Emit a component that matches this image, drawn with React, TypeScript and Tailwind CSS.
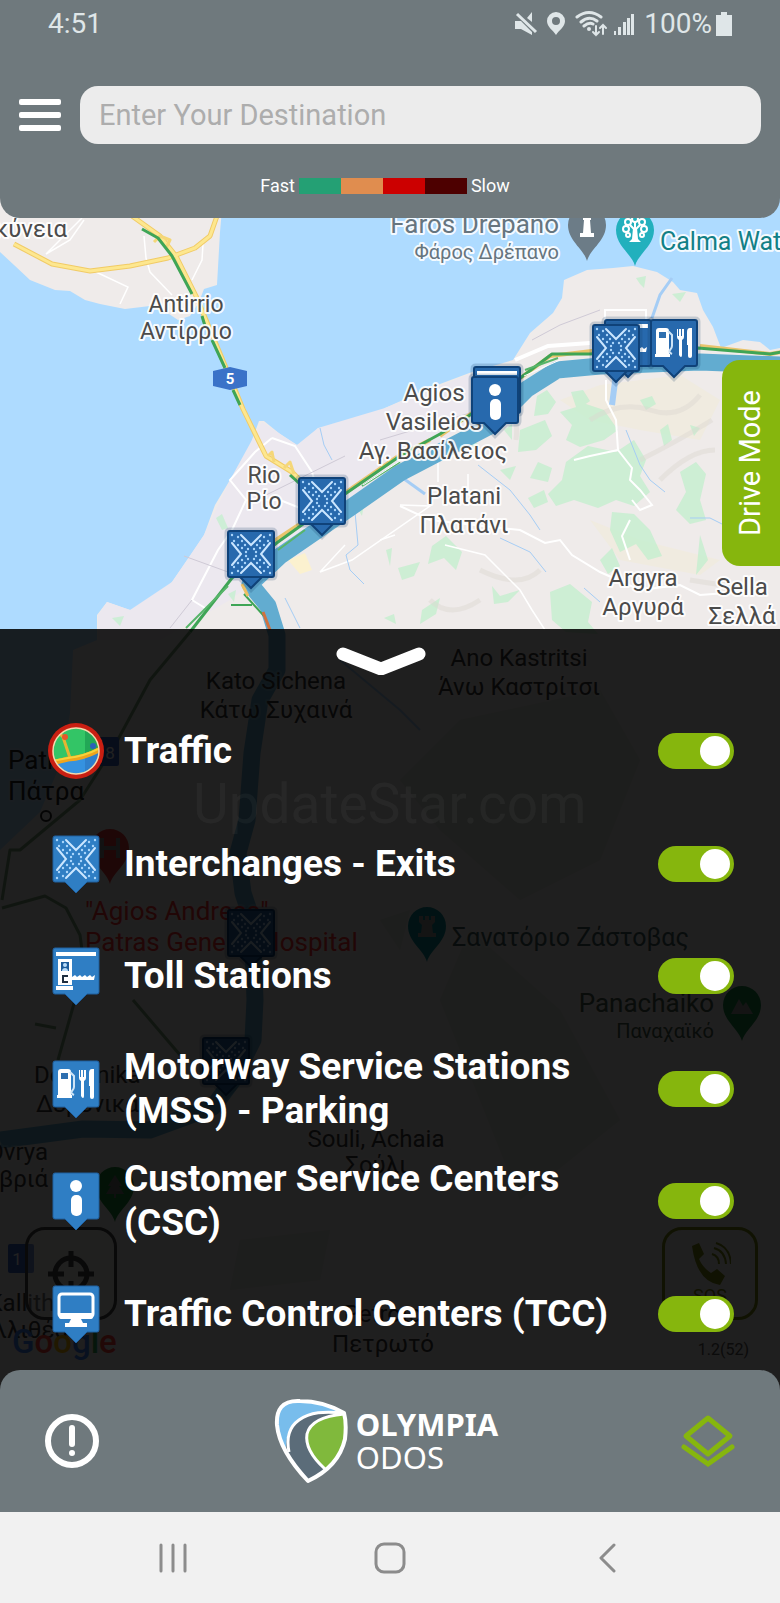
import { useState } from "react";

type PinKind = "interchange" | "toll" | "mss" | "info" | "tcc";

const LAYERS: { id: string; label: string; pin?: PinKind }[] = [
    { id: "traffic", label: "Traffic" },
    { id: "interchanges", label: "Interchanges - Exits", pin: "interchange" },
    { id: "tolls", label: "Toll Stations", pin: "toll" },
    { id: "mss", label: "Motorway Service Stations (MSS) - Parking", pin: "mss" },
    { id: "csc", label: "Customer Service Centers (CSC)", pin: "info" },
    { id: "tcc", label: "Traffic Control Centers (TCC)", pin: "tcc" },
];

const SPEEDS = ["bg-[#24a074]", "bg-[#e08d4f]", "bg-[#cc0000]", "bg-[#4d0000]"];

type Anchor = "start" | "middle" | "end";

// x, baseline, text, anchor, size, colour
const PLACES: [number, number, string, Anchor, number, string][] = [
    [67, 237, "κύνεια", "end", 24, "#4b4b4b"],
    [186, 312, "Antirrio", "middle", 23, "#4b4b4b"],
    [186, 339, "Αντίρριο", "middle", 23, "#4b4b4b"],
    [264, 483, "Rio", "middle", 23, "#4b4b4b"],
    [264, 509, "Ρίο", "middle", 23, "#4b4b4b"],
    [434, 401, "Agios", "middle", 24, "#4b4b4b"],
    [434, 430, "Vasileios", "middle", 24, "#4b4b4b"],
    [433, 459, "Αγ. Βασίλειος", "middle", 24, "#4b4b4b"],
    [464, 504, "Platani", "middle", 24, "#4b4b4b"],
    [464, 533, "Πλατάνι", "middle", 24, "#4b4b4b"],
    [643, 586, "Argyra", "middle", 24, "#4b4b4b"],
    [643, 615, "Αργυρά", "middle", 24, "#4b4b4b"],
    [742, 595, "Sella", "middle", 24, "#4b4b4b"],
    [742, 624, "Σελλά", "middle", 24, "#4b4b4b"],
    [559, 233, "Faros Drepano", "end", 26, "#66757f"],
    [559, 259, "Φάρος Δρέπανο", "end", 20, "#66757f"],
    [660, 250, "Calma Water", "start", 25, "#128087"],
    [276, 689, "Kato Sichena", "middle", 24, "#3a3a3a"],
    [276, 718, "Κάτω Συχαινά", "middle", 24, "#3a3a3a"],
    [519, 666, "Ano Kastritsi", "middle", 24, "#3a3a3a"],
    [519, 695, "Άνω Καστρίτσι", "middle", 24, "#3a3a3a"],
    [8, 769, "Patra", "start", 26, "#222222"],
    [8, 800, "Πάτρα", "start", 26, "#222222"],
    [85, 920, "\"Agios Andreas\"", "start", 26, "#ff3030"],
    [85, 951, "Patras General Hospital", "start", 26, "#ff3030"],
    [452, 946, "Σανατόριο Ζάστοβας", "start", 25, "#3f5f60"],
    [714, 1012, "Panachaiko", "end", 26, "#45604d"],
    [714, 1038, "Παναχαϊκό", "end", 20, "#45604d"],
    [34, 1083, "Demenika", "start", 24, "#3a3a3a"],
    [36, 1112, "Δεμένικα", "start", 24, "#3a3a3a"],
    [48, 1160, "Ovrya", "end", 24, "#3a3a3a"],
    [48, 1187, "Οβριά", "end", 24, "#3a3a3a"],
    [376, 1147, "Souli, Achaia", "middle", 24, "#3a3a3a"],
    [376, 1173, "Σούλι", "middle", 24, "#3a3a3a"],
    [383, 1322, "Petroto", "middle", 24, "#3a3a3a"],
    [383, 1352, "Πετρωτό", "middle", 24, "#3a3a3a"],
    [80, 1311, "Kallithea", "end", 24, "#3a3a3a"],
    [68, 1338, "Καλλιθέα", "end", 24, "#3a3a3a"],
];

const MARKERS: [number, number, PinKind][] = [
    [228, 531, "interchange"],
    [299, 478, "interchange"],
    [605, 320, "toll"],
    [593, 325, "interchange"],
    [651, 320, "mss"],
    [474, 367, "toll"],
    [472, 377, "info"],
    [228, 910, "interchange"],
    [203, 1038, "interchange"],
];

// one arm of the dotted crossing, mirrored into the other three corners
const ARM_DOTS = [[4, 4], [10, 6], [6, 10], [14, 10], [10, 14], [17, 14], [14, 17], [20, 18], [18, 21]];

function PinGlyph({ kind }: { kind: PinKind }) {
    switch (kind) {
        case "interchange":
            return (
                <g>
                    <g fill="none" stroke="#cbe6ff" strokeWidth="2" strokeLinecap="round">
                        <path d="M13 4L23 14L33 4M13 42L23 32L33 42M4 12L13 23L4 34M42 12L33 23L42 34" />
                    </g>
                    <g fill="#a9d6fb">
                        {ARM_DOTS.map(([x, y]) => (
                            <g key={`${x}-${y}`}>
                                <circle cx={x} cy={y} r="1.2" />
                                <circle cx={46 - x} cy={y} r="1.2" />
                                <circle cx={x} cy={46 - y} r="1.2" />
                                <circle cx={46 - x} cy={46 - y} r="1.2" />
                            </g>
                        ))}
                    </g>
                </g>
            );
        case "toll":
            return (
                <g fill="#fff">
                    <rect x="3" y="4" width="40" height="4" />
                    <path d="M5 11h14v26H5z" />
                    <path d="M3 38h17v4H3z" />
                    <path d="M8 14h8v9H8z" fill="#1d5c9a" />
                    <circle cx="12" cy="17" r="2" fill="#b9dcf8" />
                    <path d="M9 23c0-4 6-4 6 0z" fill="#b9dcf8" />
                    <path d="M15 28h-5v6h5" fill="none" stroke="#1f2f40" strokeWidth="2" />
                    <path d="M19 29l3-2 2 2 3-2 2 2 3-2 2 2 3-2 2 2 3-2-1 5H19z" />
                </g>
            );
        case "mss":
            return (
                <g fill="#fff">
                    <path d="M5 11q0-3 3-3h7q3 0 3 3v23h1v3H4v-3h1z" />
                    <path d="M8 12h7v6H8z" fill="#2d6fb0" />
                    <path d="M17 11l4 4v11q0 2-2 4t2 4" fill="none" stroke="#cfe4f6" strokeWidth="2" />
                    <path d="M26 9h1v7h1V9h2v7h1V9h2v8q0 2-2 3v15q0 2-1 2t-2-2V20q-2-1-2-3z" />
                    <path d="M36 12q0-4 3-4h2v28q0 2-2 2t-2-2V25h-1z" />
                </g>
            );
        case "info":
            return (
                <g fill="#fff">
                    <circle cx="23" cy="13" r="6" />
                    <rect x="18" y="22" width="11" height="21" rx="5" />
                </g>
            );
        case "tcc":
            return (
                <g>
                    <rect x="6" y="8" width="34" height="23" rx="3" fill="none" stroke="#fff" strokeWidth="3" />
                    <path d="M6 27h34v4q0 2-2 2H8q-2 0-2-2zM18 33h10l2 4h4v4H12v-4h4z" fill="#fff" />
                </g>
            );
    }
}

function Pin({ kind, x, y, outlined = false }: { kind: PinKind; x?: number; y?: number; outlined?: boolean }) {
    const body = "M2 0H44Q46 0 46 2V44Q46 46 44 46H34L23 57L12 46H2Q0 46 0 44V2Q0 0 2 0Z";
    return (
        <svg x={x} y={y} width="46" height="56" viewBox="0 0 46 56" overflow="visible" aria-hidden="true">
            {outlined && <path d={body} fill="none" stroke="#123a66" strokeOpacity="0.2" strokeWidth="7" />}
            <path
                d={body}
                fill={outlined ? "#2769ad" : "#2f7ec4"}
                stroke={outlined ? "#0f4279" : "#20609f"}
                strokeWidth={outlined ? 2 : 1}
            />
            {outlined && kind === "interchange" && <path d="M12 46H34" stroke="#0f4279" strokeWidth="2" />}
            <PinGlyph kind={kind} />
        </svg>
    );
}

function TrafficIcon() {
    return (
        <svg width="56" height="56" viewBox="0 0 56 56" aria-hidden="true">
            <defs>
                <clipPath id="traffic-disc">
                    <circle cx="28" cy="28" r="23" />
                </clipPath>
            </defs>
            <circle cx="28" cy="28" r="28" fill="#c91f12" />
            <g clipPath="url(#traffic-disc)">
                <rect width="56" height="56" fill="#33c566" />
                <path d="M37 0H56V56H37Z" fill="#22a756" />
                <path d="M0 42L20 37Q40 36 56 24V56H0Z" fill="#3592e0" />
                <path d="M37 35Q48 31 56 24V56H37Z" fill="#2f80cc" />
                <path d="M0 41L20 36Q38 35 56 24" fill="none" stroke="#f0a51c" strokeWidth="5" />
                <path d="M10 9L15 14L22 35" fill="none" stroke="#e5b432" strokeWidth="3" />
                <path d="M4 38L20 35Q38 33 54 24" fill="none" stroke="#f6d33c" strokeWidth="2" />
                <circle cx="17" cy="14" r="3" fill="#e6572b" />
                <circle cx="45" cy="23" r="3" fill="#2b62b8" />
            </g>
            <circle cx="28" cy="28" r="23" fill="none" stroke="#f5d9ae" strokeWidth="1.5" />
        </svg>
    );
}

function Teardrop({ x, y, fill, children }: { x: number; y: number; fill: string; children: React.ReactNode }) {
    return (
        <g transform={`translate(${x} ${y})`}>
            <path d="M0 36C-3 24-19 16-19 0A19 19 0 0 1 19 0C19 16 3 24 0 36Z" fill={fill} />
            {children}
        </g>
    );
}

function MapCanvas() {
    return (
        <svg
            className="absolute inset-0 h-full w-full"
            viewBox="0 198 780 1192"
            preserveAspectRatio="xMidYMin slice"
            fontFamily="Roboto, 'Noto Sans', sans-serif"
            role="img"
            aria-label="Map of Patras and Rio"
        >
            <rect y="198" width="780" height="1192" fill="#aedbff" />

            <g fill="#efebea">
                <path d="M0 198H223L220 232L217 285L204 289L199 302L190 316L178 320L166 312L150 306L125 309L100 304L85 300L70 291L55 290L30 280L14 265L0 252Z" />
                <path d="M97 640L97 615L107 602L130 610L150 606L172 582L190 556L204 535L215 505L230 480L248 456L252 440L259 421L264 421L280 434L297 445L308 440L318 428L335 432L352 423L368 420L385 408L403 400L440 384L472 372L513 360L530 333L553 313L562 298L564 280L587 270L613 268L633 266L657 272L673 282L680 290L697 293L703 310L713 327L721 348L743 340L760 342L770 350L780 348V1390H0V850L40 812L62 760L70 713L73 650Z" />
            </g>
            <path d="M252 440L262 422L297 445L318 428L385 408L470 374L500 400L345 510L230 600L160 640H98V615L107 602L130 610L172 582L204 535L230 480Z" fill="#ece8ef" />

            {/* hills and woods */}
            <g fill="#f0ebe0">
                <path d="M560 400L600 385L680 375L720 400L700 440L640 430L590 420Z" />
                <path d="M288 560L305 553L312 570L300 574Z" fill="#fbf1cf" />
                <path d="M590 520L640 540L720 560L700 575L620 560Z" />
            </g>
            <g fill="#c5efcf" opacity="0.8">
                <path d="M537 396L547 390L556 402L548 414L534 416ZM571 392L583 390L590 401L577 410ZM560 412L586 404L604 410L618 430L604 440L580 447L566 440L572 425Z" />
                <path d="M566 462L588 446L616 452L634 440L646 460L640 476L650 492L634 506L616 500L598 508L574 500L556 506L548 494L562 480Z" />
                <path d="M520 430L545 420L552 436L536 450L518 452ZM538 462L552 468L548 482L530 478Z" />
                <path d="M680 472L696 462L706 474L700 500L706 520L690 524L676 510L686 492ZM612 512L634 514L650 530L662 556L648 560L636 544L620 552L610 530Z" />
                <path d="M432 546L446 536L462 552L456 570L444 558L428 564ZM398 568L420 562L414 576L402 580Z" />
                <path d="M550 592L570 584L592 602L588 622L598 634L566 632L552 620ZM700 535L708 560L696 575Z" />
                <path d="M636 278L646 276L644 288L640 284ZM672 294L686 292L680 302ZM422 610L440 598L436 614L420 624ZM492 586L500 596L520 590L508 602L494 604Z" />
                <path d="M216 518L222 514L228 528L222 530ZM228 594L236 590L234 602ZM112 618L124 616L120 626ZM356 506L364 504L362 516ZM386 550L392 548L390 566ZM384 618L394 614L396 624Z" />
                <path d="M480 400L500 395L505 404L488 412ZM690 425L700 428L694 436ZM470 440L480 445L474 452ZM500 470L516 466L510 480Z" />
                <path d="M600 560L612 548L620 566L608 574ZM640 400L652 396L656 404L646 410ZM660 430L668 424L672 440L664 446ZM528 498L544 490L548 502L534 508ZM504 430L512 424L512 440Z" />
            </g>
            <g fill="#a9d8b4" opacity="0.25">
                <path d="M460 720L600 690L640 760L600 860L520 900L440 830L400 780Z" />
                <path d="M470 930L560 1010L620 1120L520 1200L480 1100L440 1000Z" />
                <path d="M240 1240L330 1230L320 1280L230 1290ZM380 920L410 910L400 950Z" />
            </g>
            <g fill="none" stroke="#dcd7d0" strokeWidth="5" opacity="0.45">
                <path d="M590 420Q620 400 650 410T700 395M640 460Q680 440 712 420M500 400Q520 410 516 440M660 480Q690 450 715 450M480 570Q520 590 540 570M690 580Q720 585 760 590M430 600Q450 620 480 600" />
            </g>

            {/* minor roads and streams */}
            <g fill="none" stroke="#ffffff" strokeWidth="2">
                <path d="M82 218L46 254L70 240L84 220M144 236L146 258L150 272L172 295M203 244L202 260L192 280M96 272L128 287L120 304" strokeWidth="1.5" />
                <path d="M272 438L255 452L230 480L246 500L232 530L218 550L192 600L205 608M272 438L295 446L312 472L320 500M246 500L280 500L300 508" strokeWidth="2" />
                <path d="M400 505L430 506L352 560L320 572L345 545M438 462V482M468 474V490" strokeWidth="1.5" />
                <path d="M515 360L548 346L590 343" strokeWidth="4" />
                <path d="M605 322V310H646V320" />
                <path d="M606 380L606 400L616 420L618 450L632 468L630 480L640 490L652 505L640 510L632 500M618 450L590 456L574 460M630 520L622 536L630 560" />
                <path d="M400 506L430 520L520 530L545 543L560 540L572 555L600 572L640 590L680 585L700 595L740 592" />
                <path d="M445 545L485 555L500 570L520 590L532 610L545 630M380 540L395 535" strokeWidth="1.5" />
            </g>
            <g fill="none" stroke="#cfcad6" strokeWidth="1">
                <path d="M184 556L228 572M264 496L345 456M480 410L380 440M532 340L560 325L600 310M170 628L192 600" />
            </g>
            <g fill="none" stroke="#a5cdf5" strokeWidth="1">
                <path d="M320 428L324 445L332 460M355 512L358 545L346 555L350 570L364 584M285 598L300 628" />
                <path d="M672 278L660 295L652 318" strokeWidth="3" />
                <path d="M400 476L425 494" strokeWidth="3" />
                <path d="M478 465L510 490L530 515L540 530M500 538L530 552L546 572M626 430L640 465L650 480L665 492M690 518L710 518L722 524M584 588L600 602" />
                <path d="M616 374L612 405" strokeWidth="6" />
                <path d="M340 660L400 710L420 730" strokeWidth="2" />
            </g>

            {/* bridge and provincial roads */}
            <g fill="none" strokeLinejoin="round">
                <g stroke="#f1cb66" strokeWidth="5">
                    <path d="M14 244L52 264L90 271L130 266L168 258L195 248L210 236L217 216M132 216L160 236L176 256L196 296L226 368L243 409L266 456L292 472L302 482" />
                </g>
                <g stroke="#fde78f" strokeWidth="3">
                    <path d="M14 244L52 264L90 271L130 266L168 258L195 248L210 236L217 216M132 216L160 236L176 256L196 296L226 368L243 409L266 456L292 472L302 482" />
                </g>
                <path d="M154 242L160 236L170 240L166 248M268 456L272 452L274 462M284 468L290 462L294 474" stroke="#f5d778" strokeWidth="3" />
                <path d="M142 229L158 238L172 256L192 294M202 316L205 326M212 340L225 368M233 390L240 405M290 475L300 484" stroke="#3fa556" strokeWidth="3" />
            </g>

            {/* motorway */}
            <g fill="none" strokeLinejoin="round">
                <path
                    d="M0 1140L83 1129L150 1130L213 1107L233 1080L253 1040L255 1000L252 920L243 893L238 853L247 820L252 753L260 700L277 670V635L268 606L250 584L280 556L350 508L400 473L490 426L527 389L557 370L600 366L700 362L780 365"
                    stroke="#62acd0"
                    strokeWidth="17"
                />
                <path d="M250 557L300 524L400 455L430 440M440 436L515 382L550 356L600 350M700 346L770 354L782 352" stroke="#e9c46c" strokeWidth="4" />
                <path d="M190 632L232 578L278 542L345 494L400 456L440 434L470 415L515 382L552 354L590 354L640 350L698 348L770 354L782 352" stroke="#3fa556" strokeWidth="3" />
                <path d="M186 628L228 586M278 550L305 530M362 486L400 462M525 370L558 358" stroke="#57b56a" strokeWidth="2" />
                <path d="M363 485L400 461M524 376L560 360" stroke="#ffffff" strokeWidth="1" />
                <path d="M231 605H252M244 594L264 616" stroke="#3fa556" strokeWidth="2" />
                <path d="M263 612L270 630" stroke="#d0713f" strokeWidth="3" />
                <path d="M242 584L248 596" stroke="#edbf62" strokeWidth="3" />
                <path d="M190 632L150 680L115 745L80 800L20 850H10L2 900M2 908L45 896L66 908L80 935L82 950M75 1000L58 1060M133 1000L180 1055M35 1024L56 1028" stroke="#7ba47c" strokeWidth="3" />
            </g>

            <path d="M213 371L230 367L247 371V386L230 390L213 386Z" fill="#3a72c8" />
            <text x="230" y="384" textAnchor="middle" fontSize="15" fontWeight="700" fill="#fff">5</text>
            <rect x="97" y="737" width="22" height="29" rx="2" fill="#3a62c8" />
            <text x="110" y="759" textAnchor="middle" fontSize="17" fill="#fff">8</text>
            <rect x="8" y="1244" width="26" height="29" rx="2" fill="#3a62c8" />
            <text x="17" y="1265" textAnchor="middle" fontSize="17" fill="#fff">1</text>
            <circle cx="46" cy="816" r="5" fill="none" stroke="#222" strokeWidth="2" />

            <Teardrop x={587} y={225} fill="#6c7c87">
                <path d="M-4-8H4V-5H3L4 8H7V12H-7V8H-4L-3-5H-4Z" fill="#fff" />
            </Teardrop>
            <Teardrop x={635} y={230} fill="#22b0bd">
                <g fill="none" stroke="#fff" strokeWidth="2">
                    <circle cx="0" cy="-11" r="3" />
                    <circle cx="-7" cy="-8" r="3" />
                    <circle cx="7" cy="-8" r="3" />
                    <circle cx="-9" cy="-1" r="3" />
                    <circle cx="9" cy="-1" r="3" />
                    <circle cx="7" cy="5" r="2" />
                    <circle cx="-7" cy="5" r="2" />
                    <path d="M0-8V0M-5-5L0 0L5-5" />
                </g>
                <path d="M-2-2H2L3 9L6 12H-6L-3 9Z" fill="#fff" />
            </Teardrop>
            <Teardrop x={110} y={848} fill="#e53935">
                <path d="M-8-10V10M8-10V10M-8 0H8" fill="none" stroke="#888" strokeWidth="4" />
            </Teardrop>
            <Teardrop x={427} y={926} fill="#0c8f98">
                <path d="M-8-10V-4L-5-1L-6 7H-9V11H9V7H6L5-1L8-4V-10H4V-6H2V-10H-2V-6H-4V-10Z" fill="#999" />
            </Teardrop>
            <Teardrop x={742} y={1005} fill="#1c8a4a">
                <path d="M-11 9L-3-6L1 1L4-3L11 9Z" fill="#999" />
            </Teardrop>
            <Teardrop x={115} y={1186} fill="#1c8a3a">
                <path d="M0-11L7 0H4L9 8H1V12H-1V8H-9L-4 0H-7Z" fill="#777" />
            </Teardrop>

            {PLACES.map(([x, y, text, anchor, size, color]) => (
                <text
                    key={text}
                    x={x}
                    y={y}
                    textAnchor={anchor}
                    fontSize={size}
                    fill={color}
                    stroke="#ffffff"
                    strokeOpacity={y > 640 ? 0.2 : 0.9}
                    strokeWidth="4"
                    strokeLinejoin="round"
                    paintOrder="stroke"
                >
                    {text}
                </text>
            ))}

            {MARKERS.map(([x, y, kind]) => (
                <Pin key={`${x}-${y}`} kind={kind} x={x} y={y} outlined />
            ))}

            <text x="12" y="1353" fontSize="33" fontWeight="500">
                <tspan fill="#4285f4">G</tspan>
                <tspan fill="#ff4335">o</tspan>
                <tspan fill="#fbbc05">o</tspan>
                <tspan fill="#4285f4">g</tspan>
                <tspan fill="#34a853">l</tspan>
                <tspan fill="#ff4335">e</tspan>
            </text>
            <text x="749" y="1355" textAnchor="end" fontSize="16" fill="#555">1.2(52)</text>
        </svg>
    );
}

function StatusBar() {
    return (
        <div className="flex h-12 items-center justify-between px-12 text-[#dfe6e8]">
            <span className="text-[28px] leading-8">4:51</span>
            <div className="flex items-center">
                <svg width="132" height="32" viewBox="0 0 132 32" fill="#dfe6e8" aria-hidden="true">
                    {/* muted speaker */}
                    <path d="M13 13H19L24 18L30 24V27L19 21H13ZM30 4V14L25 10Z" />
                    <path d="M15 6L34 24" stroke="#dfe6e8" strokeWidth="3" />
                    {/* location */}
                    <path d="M54 4a9 9 0 0 1 9 9c0 6-6 9-9 14c-3-5-9-8-9-14a9 9 0 0 1 9-9zm0 5a4 4 0 1 0 0 8a4 4 0 0 0 0-8z" />
                    {/* wifi */}
                    <g fill="none" stroke="#dfe6e8" strokeWidth="2" strokeLinecap="round">
                        <path d="M75 9Q87 0 99 9M79 14Q87 7 95 13M82 18Q87 14 91 16" strokeWidth="3" />
                        <path d="M94 18V27M91 24L94 27L97 24M101 26V17M98 20L101 17L104 20" />
                    </g>
                    <circle cx="87" cy="21" r="2" />
                    {/* signal */}
                    <path d="M112 23h2v4h-2zM116 19h3v8h-3zM121 14h3v13h-3zM125 10h3v17h-3zM129 6h3v21h-3z" />
                </svg>
                <span className="ml-[10px] text-[28px] leading-8">100%</span>
                <svg width="16" height="24" viewBox="0 0 16 24" fill="#dfe6e8" className="ml-1" aria-hidden="true">
                    <path d="M5 0h6v3h5v21H0V3h5z" />
                </svg>
            </div>
        </div>
    );
}

function Header() {
    return (
        <header className="relative z-10 rounded-b-[20px] bg-[#6f797d] pb-[22px]">
            <StatusBar />
            <div className="mt-[38px] flex items-center gap-[19px] px-[19px]">
                <button type="button" aria-label="Menu" className="flex w-[42px] flex-col gap-[7px]">
                    <span className="h-[6px] w-full rounded-[2px] bg-white" />
                    <span className="h-[6px] w-full rounded-[2px] bg-white" />
                    <span className="h-[6px] w-full rounded-[2px] bg-white" />
                </button>
                <input
                    type="text"
                    aria-label="Destination"
                    placeholder="Enter Your Destination"
                    className="h-[58px] min-w-0 flex-1 rounded-[18px] bg-[#ececec] px-[19px] text-[29px] text-gray-700 outline-none placeholder:text-[#adadad]"
                />
            </div>
            <div className="mt-8 flex items-center justify-center gap-1 pr-[10px] text-[18px] leading-5 text-white">
                <span>Fast</span>
                <div className="flex">
                    {SPEEDS.map((color) => (
                        <span key={color} className={`h-4 w-[42px] ${color}`} />
                    ))}
                </div>
                <span>Slow</span>
            </div>
        </header>
    );
}

function LayersPanel() {
    const [enabled, setEnabled] = useState<Record<string, boolean>>(() =>
        Object.fromEntries(LAYERS.map((layer) => [layer.id, true]))
    );

    return (
        <section className="relative -mb-5 flex flex-1 flex-col bg-black/87 pb-5">
            <span className="absolute top-[150px] left-[193px] text-[55px] leading-[50px] text-white/4">
                UpdateStar.com
            </span>
            <button type="button" aria-label="Collapse layers" className="flex h-[66px] justify-center pt-[18px] pr-[18px]">
                <svg width="90" height="30" viewBox="0 0 90 30" aria-hidden="true">
                    <path d="M7 7L45 22L83 7" fill="none" stroke="#fff" strokeWidth="13" strokeLinecap="round" strokeLinejoin="bevel" />
                </svg>
            </button>
            <ul className="relative grid flex-1 auto-rows-fr">
                {LAYERS.map((layer) => (
                    <li key={layer.id} className="flex items-center pr-[46px] pl-12">
                        <span className="flex w-14 shrink-0 justify-center">
                            {layer.pin ? <Pin kind={layer.pin} /> : <TrafficIcon />}
                        </span>
                        <label htmlFor={layer.id} className="flex-1 pl-5 text-[37px] leading-[44px] font-bold text-white">
                            {layer.label}
                        </label>
                        <input
                            id={layer.id}
                            type="checkbox"
                            role="switch"
                            checked={enabled[layer.id]}
                            onChange={(e) => setEnabled({ ...enabled, [layer.id]: e.target.checked })}
                            className="relative h-9 w-[76px] shrink-0 appearance-none rounded-full bg-gray-500 before:absolute before:top-[3px] before:left-1 before:h-[30px] before:w-[30px] before:rounded-full before:bg-white checked:bg-[#86b60d] checked:before:left-[42px]"
                        />
                    </li>
                ))}
            </ul>
        </section>
    );
}

function Footer() {
    return (
        <footer className="relative z-10 flex h-[142px] items-center justify-between rounded-t-[20px] bg-[#6f797d] px-11">
            <button type="button" aria-label="Report an incident">
                <svg width="56" height="56" viewBox="0 0 56 56" fill="none" stroke="#fff" aria-hidden="true">
                    <circle cx="28" cy="28" r="24" strokeWidth="6" />
                    <path d="M28 15V31" strokeWidth="6" strokeLinecap="round" />
                    <circle cx="28" cy="40" r="3" fill="#fff" stroke="none" />
                </svg>
            </button>
            <div className="flex items-center gap-2 pr-2">
                <svg width="74" height="86" viewBox="0 0 74 86" aria-hidden="true">
                    <path d="M70 15C56 7 40 3 26 3C8 2 2 12 3 27C5 48 18 66 34 83C49 76 66 63 71 41C72 32 72 22 70 15Z" fill="#5b6c79" />
                    <path d="M70 15C56 7 40 3 26 3C8 2 2 12 3 27C4 35 7 43 12 50C12 32 20 20 36 17C48 14 60 14 70 15Z" fill="#78bdec" />
                    <path d="M70 17C48 18 36 24 33 36C31 48 40 61 51 71C62 65 69 53 71 39C72 31 71 23 70 17Z" fill="#80b93c" />
                    <g fill="none" stroke="#fff" strokeWidth="4" strokeLinejoin="round">
                        <path d="M70 15C56 7 40 3 26 3C8 2 2 12 3 27C5 48 18 66 34 83C49 76 66 63 71 41C72 32 72 22 70 15Z" />
                        <path d="M70 15C50 13 36 14 25 22C15 29 12 39 15 54" strokeWidth="3" />
                        <path d="M70 16C48 18 36 24 33 36C31 48 40 61 51 71" strokeWidth="3" />
                    </g>
                </svg>
                <div className="flex flex-col font-['Noto_Sans'] text-[31px] leading-[33px] text-white">
                    <span className="font-bold">OLYMPIA</span>
                    <span>ODOS</span>
                </div>
            </div>
            <button type="button" aria-label="Map layers">
                <svg width="56" height="56" viewBox="0 0 56 56" fill="none" stroke="#86b60d" strokeWidth="5" strokeLinecap="round" aria-hidden="true">
                    <path d="M28 5L50 23L28 41L6 23Z" strokeLinejoin="round" />
                    <path d="M4 34L28 51L52 34" />
                </svg>
            </button>
        </footer>
    );
}

function SystemNav() {
    return (
        <nav className="grid h-[91px] grid-cols-3 items-center justify-items-center bg-[#f1f1f1] px-16">
            <button type="button" aria-label="Recent apps">
                <svg width="30" height="32" viewBox="0 0 30 32" stroke="#8c8c8c" strokeWidth="3" strokeLinecap="round" aria-hidden="true">
                    <path d="M3 3V29M15 3V29M27 3V29" />
                </svg>
            </button>
            <button type="button" aria-label="Home">
                <svg width="32" height="32" viewBox="0 0 32 32" fill="none" stroke="#8c8c8c" strokeWidth="3" aria-hidden="true">
                    <rect x="2" y="2" width="28" height="28" rx="8" />
                </svg>
            </button>
            <button type="button" aria-label="Back">
                <svg width="18" height="32" viewBox="0 0 18 32" fill="none" stroke="#8c8c8c" strokeWidth="3" strokeLinecap="round" strokeLinejoin="round" aria-hidden="true">
                    <path d="M16 3L3 16L16 29" />
                </svg>
            </button>
        </nav>
    );
}

export default function App() {
    return (
        <div className="flex min-h-screen flex-col font-[Roboto,'Noto_Sans',sans-serif]">
            <Header />
            <main className="relative -my-5 flex flex-1 flex-col overflow-hidden py-5">
                <MapCanvas />
                <button
                    type="button"
                    aria-label="My location"
                    className="absolute bottom-[70px] left-[25px] flex h-[93px] w-[92px] items-center justify-center rounded-[20px] border-[3px] border-[#444] bg-white/30"
                >
                    <svg width="46" height="46" viewBox="0 0 46 46" fill="none" stroke="#444" strokeWidth="5" aria-hidden="true">
                        <circle cx="23" cy="23" r="16" />
                        <path d="M23 0V16M23 30V46M0 23H16M30 23H46" />
                    </svg>
                </button>
                <button
                    type="button"
                    aria-label="Call SOS"
                    className="absolute right-[22px] bottom-[70px] flex h-[93px] w-[96px] flex-col items-center rounded-[20px] border-[3px] border-[#7b8a10] pt-3 text-[18px] leading-5 text-[#7b8a10]"
                >
                    <svg width="42" height="44" viewBox="0 0 42 44" fill="none" aria-hidden="true">
                        <path d="M3 4L10 1L15 12L10 17Q14 26 22 31L28 27L36 34L31 43Q8 40 3 4Z" fill="#7b8a10" />
                        <path d="M23 12Q30 14 30 22M25 6Q36 9 37 22M27 1Q41 5 42 22" stroke="#7b8a10" strokeWidth="2" />
                    </svg>
                    <span>SOS</span>
                </button>
                <div className="relative flex h-[411px] shrink-0 items-start justify-end pt-[142px]">
                    <button
                        type="button"
                        className="flex h-[206px] w-[58px] items-center justify-center rounded-l-[18px] bg-[#86b60d] text-[29px] text-white"
                    >
                        <span className="rotate-180 [writing-mode:vertical-rl]">Drive Mode</span>
                    </button>
                </div>
                <LayersPanel />
            </main>
            <Footer />
            <SystemNav />
        </div>
    );
}
